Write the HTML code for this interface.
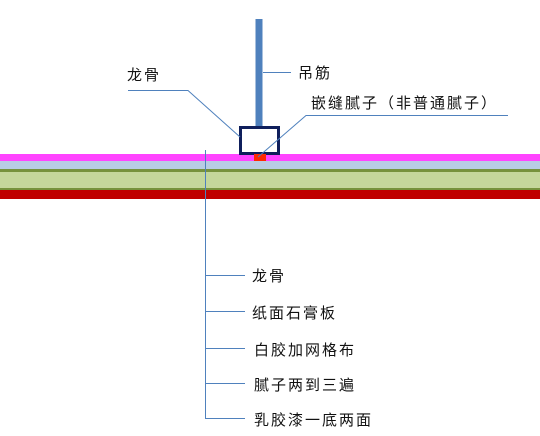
<!DOCTYPE html>
<html><head><meta charset="utf-8"><style>
html,body{margin:0;padding:0;background:#fff;width:540px;height:436px;overflow:hidden}
svg{display:block}
text{font-family:"Liberation Sans","WenQuanYi Zen Hei","Noto Sans CJK SC",sans-serif;font-size:15px;letter-spacing:2px;fill:#111}
</style></head><body>
<svg width="540" height="436" viewBox="0 0 540 436">
<rect x="0" y="154" width="540" height="7" fill="#ff44ff"/>
<rect x="0" y="161" width="540" height="8" fill="#b8cce4"/>
<rect x="0" y="169" width="540" height="3" fill="#76923c"/>
<rect x="0" y="172" width="540" height="16" fill="#c4d79b"/>
<rect x="0" y="188" width="540" height="2" fill="#76923c"/>
<rect x="0" y="190" width="540" height="9" fill="#c00000"/>
<rect x="255.5" y="19" width="7" height="108" fill="#4f81bd"/>
<rect x="240.5" y="127.5" width="38" height="26" fill="#fff" stroke="#0f1f5c" stroke-width="3"/>
<rect x="254" y="154" width="12" height="7" fill="#ff2a00"/>
<g stroke="#4f81bd" stroke-width="1" fill="none">
<line x1="263" y1="72.5" x2="291" y2="72.5"/>
<polyline points="128,90.5 188,90.5 240,137"/>
<polyline points="508,115.5 306,115.5 258,157"/>
<line x1="205.5" y1="150" x2="205.5" y2="419"/>
<line x1="205" y1="275.5" x2="245" y2="275.5"/>
<line x1="205" y1="311.5" x2="245" y2="311.5"/>
<line x1="205" y1="348.5" x2="245" y2="348.5"/>
<line x1="205" y1="383.5" x2="245" y2="383.5"/>
<line x1="205" y1="418.5" x2="245" y2="418.5"/>
</g>
<text x="127" y="80">龙骨</text>
<text x="298" y="78">吊筋</text>
<text x="311" y="108">嵌缝腻子（非普通腻子）</text>
<text x="252" y="281">龙骨</text>
<text x="252" y="318">纸面石膏板</text>
<text x="254" y="355">白胶加网格布</text>
<text x="254" y="390">腻子两到三遍</text>
<text x="254" y="425">乳胶漆一底两面</text>
</svg>
</body></html>
